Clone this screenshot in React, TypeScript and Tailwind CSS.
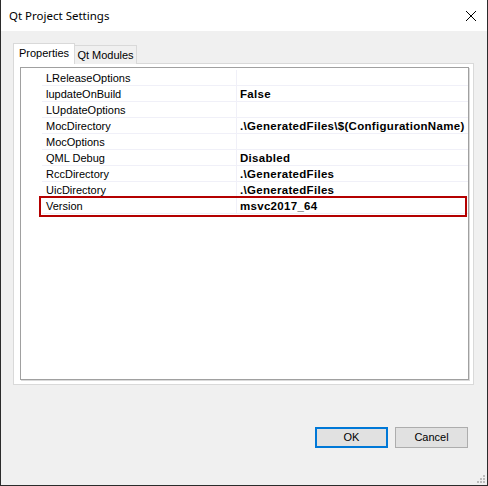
import React from 'react';

const rows: [string, string][] = [
  ['LReleaseOptions', ''],
  ['lupdateOnBuild', 'False'],
  ['LUpdateOptions', ''],
  ['MocDirectory', '.\\GeneratedFiles\\$(ConfigurationName)'],
  ['MocOptions', ''],
  ['QML Debug', 'Disabled'],
  ['RccDirectory', '.\\GeneratedFiles'],
  ['UicDirectory', '.\\GeneratedFiles'],
  ['Version', 'msvc2017_64'],
];

const sans = "font-['Liberation_Sans',Arial,sans-serif]";

const App = () => {
  return (
    <div className="w-[488px] h-[486px] flex flex-col border-x border-b border-[#2b2b2b] bg-[#f0f0f0] relative">
      {/* title bar */}
      <div className="h-[31px] bg-white flex items-center justify-between pl-[8px] pr-[9px] shrink-0">
        <span className="text-[11.5px] text-black font-['Noto_Sans',sans-serif]">Qt Project Settings</span>
        <svg width="12" height="12" viewBox="0 0 12 12" className="mr-[1px]">
          <path d="M1 1L11 11M11 1L1 11" stroke="#000" strokeWidth="1" />
        </svg>
      </div>

      <div className={`flex flex-col pt-[12px] pl-[12px] pr-[13px] ${sans} text-[11px] text-black`}>
        {/* tabs */}
        <div className="flex items-end h-[21px] relative z-10">
          <div className="w-[62px] h-[21px] bg-white border border-b-0 border-[#d9d9d9] flex items-center justify-center pb-[1px]">
            Properties
          </div>
          <div className="w-[62px] h-[19px] bg-[#f0f0f0] border border-l-0 border-b-0 border-[#d9d9d9] flex items-center justify-center">
            Qt Modules
          </div>
        </div>

        {/* tab page */}
        <div className="-mt-px h-[322px] bg-white border border-[#d9d9d9] pt-[3px] pl-[6px] pr-[4px] pb-[4px]">
          <div className="h-[313px] border border-[#a0a0a0] shadow-[1px_1px_0_#dadada] bg-white pl-[21px] pt-[2px]">
            {rows.map(([name, value]) => (
              <div key={name} className="relative flex h-[16px] border-b border-[#f0f0f8]">
                <div className="w-[195px] pl-[4px] leading-[16px] border-r border-[#f0f0f8] whitespace-nowrap">{name}</div>
                <div className="flex-1 pl-[3px] leading-[16px] text-[11.5px] tracking-[0.3px] font-bold whitespace-nowrap">{value}</div>
                {name === 'Version' && (
                  <div className="absolute -left-[3px] right-[1px] -top-[2px] -bottom-[4px] border-2 border-[#b40000]" />
                )}
              </div>
            ))}
          </div>
        </div>

        {/* buttons */}
        <div className="flex justify-end gap-[7px] mt-[42px] pr-[6px]">
          <button className="w-[73px] h-[21px] bg-[#e1e1e1] border-2 border-[#0078d7] text-[11px] text-black">OK</button>
          <button className="w-[73px] h-[21px] bg-[#e1e1e1] border border-[#adadad] text-[11px] text-black">Cancel</button>
        </div>
      </div>

      {/* resize grip */}
      <svg width="9" height="9" viewBox="0 0 9 9" className="absolute right-[2px] bottom-[2px]">
        <rect x="7" y="1" width="2" height="2" fill="#bcbcbc" />
        <rect x="4" y="4" width="2" height="2" fill="#bcbcbc" />
        <rect x="7" y="4" width="2" height="2" fill="#bcbcbc" />
        <rect x="1" y="7" width="2" height="2" fill="#bcbcbc" />
        <rect x="4" y="7" width="2" height="2" fill="#bcbcbc" />
        <rect x="7" y="7" width="2" height="2" fill="#bcbcbc" />
      </svg>
    </div>
  );
};

export default App;
